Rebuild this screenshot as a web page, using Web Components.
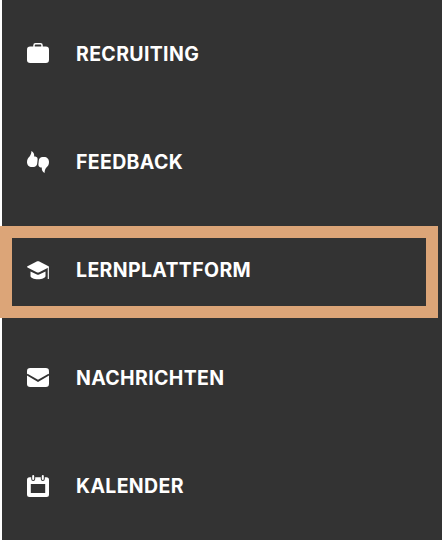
<!DOCTYPE html>
<html lang="de">
<head>
<meta charset="utf-8">
<title>Menü</title>
<style>
  html, body { margin: 0; padding: 0; background: #fff; }
</style>
</head>
<body>
<side-menu>
  <menu-item icon="briefcase">RECRUITING</menu-item>
  <menu-item icon="feedback">FEEDBACK</menu-item>
  <menu-item icon="cap" highlighted>LERNPLATTFORM</menu-item>
  <menu-item icon="mail">NACHRICHTEN</menu-item>
  <menu-item icon="calendar">KALENDER</menu-item>
</side-menu>

<script>
  const THUMB = 'M4.400 1C6.600 2 7.400 4 7.200 6.400L8.400 6.600C10 6.900 10.800 8.200 10.600 9.700L10.200 13.500C9.900 15.800 8.500 17 6.500 17H5C2 17 0 15 0 12 0 9.200 1.200 7.600 2.600 6.400 3.700 5 4.400 3.400 4.400 1z';

  const ICONS = {
    briefcase: `
      <path d="M7 5V3.200C7 2.300 7.700 1.700 8.500 1.700h5c.8 0 1.500.6 1.500 1.500V5" fill="none" stroke="#fff" stroke-width="1.500"/>
      <rect x="0" y="4.500" width="22" height="16.500" rx="3.200" fill="#fff"/>`,
    feedback: `
      <path d="${THUMB}" fill="#fff"/>
      <path d="${THUMB}" fill="#fff" transform="rotate(180 11 12)"/>`,
    cap: `
      <path d="M10.200 3.300a2 2 0 0 1 1.600 0L21.500 8.200c.6.3.6.9 0 1.200L11.800 14.400a2 2 0 0 1-1.600 0L.5 9.400c-.6-.3-.6-.9 0-1.200z" fill="#fff"/>
      <path d="M3.500 13.400l6.400 3.200a2.600 2.600 0 0 0 2.200 0l6.400-3.200V18c0 1.800-3.200 3.200-7.500 3.200S3.500 19.800 3.500 18z" fill="#fff"/>
      <path d="M21.300 9V21" stroke="#fff" stroke-width="1.100" fill="none"/>`,
    mail: `
      <rect x="0" y="2" width="22" height="19" rx="3.200" fill="#fff"/>
      <path d="M0 8.500L11 14.800 22 8.500" fill="none" stroke="#333" stroke-width="1.900"/>`,
    calendar: `
      <path d="M2.500 3.200H19.500A2.500 2.500 0 0 1 22 5.700V20.500A2.500 2.500 0 0 1 19.500 23H2.500A2.500 2.500 0 0 1 0 20.500V5.700A2.500 2.500 0 0 1 2.500 3.200zM3.800 10V19H18.200V10z" fill="#fff" fill-rule="evenodd"/>
      <rect x="4.200" y="0" width="4" height="7" rx="2" fill="#333"/>
      <rect x="13.800" y="0" width="4" height="7" rx="2" fill="#333"/>
      <rect x="5.200" y="1" width="2" height="5" rx="1" fill="#fff"/>
      <rect x="14.800" y="1" width="2" height="5" rx="1" fill="#fff"/>`,
  };

  // Dunkle Seitenleiste, 2px weisser Streifen links bleibt frei
  class SideMenu extends HTMLElement {
    constructor() {
      super();
      this.attachShadow({ mode: 'open' });
      this.shadowRoot.innerHTML = `
        <style>
          :host {
            display: flex;
            flex-direction: column;
            margin-left: 2px;
            height: 540px;
            background: #333333;
            font-family: Inter, "Liberation Sans", sans-serif;
          }
        </style>
        <slot></slot>
      `;
    }
  }

  class MenuItem extends HTMLElement {
    constructor() {
      super();
      this.attachShadow({ mode: 'open' });
      this.render();
    }

    render() {
      const icon = ICONS[this.getAttribute('icon')] || '';
      this.shadowRoot.innerHTML = `
        <style>
          :host {
            display: flex;
            align-items: center;
            gap: 27px;
            position: relative;
            height: 108px;
            padding-left: 25px;
            color: #ffffff;
            font-size: 19.5px;
            font-weight: 700;
            letter-spacing: 0.35px;
            line-height: 1;
          }

          svg {
            display: block;
            flex: none;
            width: 22px;
            height: 24px;
          }

          span {
            padding-top: 2px;
          }

          /* Markierung liegt ueber der Zeile */
          :host([highlighted])::after {
            content: '';
            position: absolute;
            top: 10px;
            bottom: 6px;
            left: -2px;
            right: 4px;
            border: 12px solid #dca578;
          }
        </style>
        <svg viewBox="0 0 22 24" aria-hidden="true">${icon}</svg>
        <span><slot></slot></span>
      `;
    }
  }

  customElements.define('side-menu', SideMenu);
  customElements.define('menu-item', MenuItem);
</script>
</body>
</html>
